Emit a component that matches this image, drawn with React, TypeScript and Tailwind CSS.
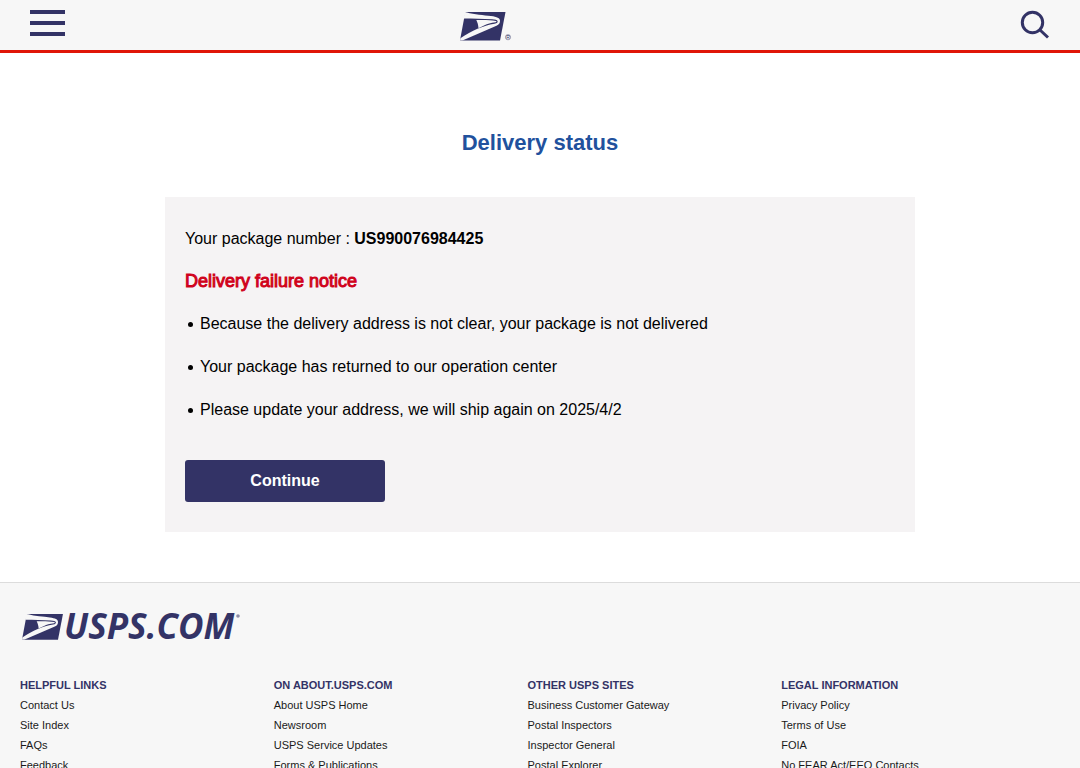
interface LinkColumn {
  title: string;
  links: string[];
}

const notices = [
  "Because the delivery address is not clear, your package is not delivered",
  "Your package has returned to our operation center",
  "Please update your address, we will ship again on 2025/4/2",
];

const columns: LinkColumn[] = [
  {
    title: "HELPFUL LINKS",
    links: ["Contact Us", "Site Index", "FAQs", "Feedback"],
  },
  {
    title: "ON ABOUT.USPS.COM",
    links: [
      "About USPS Home",
      "Newsroom",
      "USPS Service Updates",
      "Forms & Publications",
    ],
  },
  {
    title: "OTHER USPS SITES",
    links: [
      "Business Customer Gateway",
      "Postal Inspectors",
      "Inspector General",
      "Postal Explorer",
    ],
  },
  {
    title: "LEGAL INFORMATION",
    links: [
      "Privacy Policy",
      "Terms of Use",
      "FOIA",
      "No FEAR Act/EEO Contacts",
    ],
  },
];

function Eagle() {
  return (
    <>
      <path d="M5.5 0 H45.5 L40 28.5 H0 L4.2 6 Z" fill="#333366" />
      {/* head outline sweeping round the beak and down to the tail */}
      <path
        d="M4.5 0 L7 0.4 C14 2.4 24 3 31 4 C37 4.8 40 6.2 40 8.8 C40 11.4 39 12.6 36.5 13.8 L3 28.3 L0 28.5 L0.4 26.2 C12 18.8 23 13.6 34.5 11.8 C37.3 11.3 37.8 10.2 37.6 9.2 C37.3 7.8 35 7.4 32 7.2 C23 6.6 13 6.4 3.8 6.4 Z"
        fill="#f7f7f7"
      />
      <path
        d="M16.3 8 C24 7.8 31 7.9 35.8 9 C36.8 9.4 36.6 10 35.6 10.3 C30.5 10.9 27.5 11.9 24.5 13.2 L18.5 16.2 C18.2 13 17.6 10.5 16.3 8 Z"
        fill="#f7f7f7"
      />
    </>
  );
}

function Header() {
  return (
    <header className="grid h-[53px] grid-cols-3 items-start border-b-3 border-[#e01507] bg-[#f7f7f7] px-[30px]">
      <button
        type="button"
        aria-label="Menu"
        className="mt-[10px] flex w-[35px] flex-col gap-[7px]"
      >
        <span className="h-1 w-full bg-[#333366]" />
        <span className="h-1 w-full bg-[#333366]" />
        <span className="h-1 w-full bg-[#333366]" />
      </button>
      <a href="#" aria-label="USPS" className="mt-3 ml-[90px] block">
        <svg width="52" height="30" viewBox="0 0 52 30">
          <Eagle />
          <circle
            cx="48"
            cy="25.2"
            r="2.6"
            fill="none"
            stroke="#8585a0"
            strokeWidth="0.8"
          />
          <text
            x="48"
            y="27"
            textAnchor="middle"
            fontSize="5"
            fill="#333366"
          >
            R
          </text>
        </svg>
      </a>
      <button
        type="button"
        aria-label="Search"
        className="mt-[10px] justify-self-end"
      >
        <svg
          width="30"
          height="30"
          viewBox="0 0 30 30"
          fill="none"
          stroke="#333366"
          strokeWidth="3"
        >
          <circle cx="12.5" cy="12.5" r="10.2" />
          <path d="M19.5 19.5 L28 27.5" />
        </svg>
      </button>
    </header>
  );
}

function Footer() {
  return (
    <footer className="border-t border-[#dcdcdc] bg-[#f7f7f7] pt-[30px] pr-[45px] pb-10 pl-5">
      <a href="#" aria-label="USPS.COM" className="block w-[222px]">
        <svg width="222" height="30" viewBox="0 0 222 30">
          <g transform="translate(2 1) scale(0.9)">
            <Eagle />
          </g>
          <text
            x="44"
            y="26"
            fontFamily="'Open Sans', sans-serif"
            fontStyle="italic"
            fontWeight="700"
            fontSize="35"
            fill="#333366"
          >
            USPS.COM
          </text>
          <circle cx="218" cy="3" r="1.8" fill="#8d8da8" />
        </svg>
      </a>
      <nav className="mt-8 grid grid-cols-4 text-[11px] leading-5">
        {columns.map((column) => (
          <div key={column.title}>
            <h2 className="font-bold text-[#333366]">{column.title}</h2>
            <ul>
              {column.links.map((link) => (
                <li key={link}>
                  <a href="#" className="text-[#1a1a1a]">
                    {link}
                  </a>
                </li>
              ))}
            </ul>
          </div>
        ))}
      </nav>
    </footer>
  );
}

export default function App() {
  return (
    <div className="min-h-screen bg-white font-['Liberation_Sans',Arial,sans-serif] text-black">
      <Header />
      <main className="px-5 pt-[75px] pb-[50px]">
        <h1 className="text-center text-[22px] leading-[30px] font-bold text-[#21519d]">
          Delivery status
        </h1>
        <section className="mx-auto mt-[39px] max-w-[750px] bg-[#f5f3f4] px-5 py-[30px]">
          <p className="text-base">
            Your package number : <strong>US990076984425</strong>
          </p>
          <h2 className="mt-4 text-lg text-[#d0021b] [-webkit-text-stroke:1px_#d0021b]">
            Delivery failure notice
          </h2>
          <ul className="mt-[17px] space-y-[19px]">
            {notices.map((notice) => (
              <li key={notice} className="flex items-center gap-[7px] pl-[3px]">
                <span className="size-[5px] rounded-full bg-black" />
                {notice}
              </li>
            ))}
          </ul>
          <button
            type="button"
            className="mt-[38px] h-[42px] w-[200px] rounded-[3px] bg-[#333366] font-bold text-white"
          >
            Continue
          </button>
        </section>
      </main>
      <Footer />
    </div>
  );
}
